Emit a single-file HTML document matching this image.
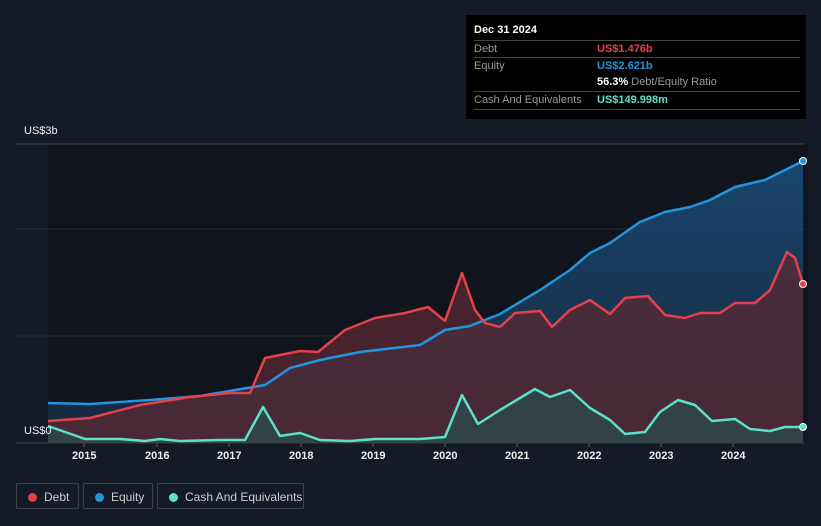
<!DOCTYPE html>
<html><head><style>
body{margin:0;width:821px;height:526px;background:#151b26;font-family:"Liberation Sans",sans-serif;overflow:hidden;position:relative}
.tt{position:absolute;left:466px;top:15px;width:340px;height:104px;background:#000;color:#fff;font-size:11px}
.tt .row{position:absolute;left:8px;width:326px;border-top:1px solid #444;height:17px;line-height:17px}
.tt .l{color:#999;position:absolute;left:0}
.tt .v{position:absolute;left:123px;font-weight:bold}
.leg{position:absolute;top:483px;height:26px;border:1px solid #3a404c;border-radius:2px;color:#ccc;font-size:12px;line-height:26px;box-sizing:border-box}
.leg i{position:absolute;left:11px;top:9px;width:9px;height:9px;border-radius:50%}
.leg span{position:absolute;left:27px}
.ax{position:absolute;top:450px;color:#eee;font-size:11px;font-weight:bold}
</style></head><body>
<svg width="821" height="526" style="position:absolute;left:0;top:0">
<rect x="48" y="144" width="760" height="300" fill="#10141c"/>
<line x1="16" y1="144" x2="805" y2="144" stroke="#3a3f4a"/>
<line x1="16" y1="229" x2="805" y2="229" stroke="#262b35"/>
<line x1="16" y1="336" x2="805" y2="336" stroke="#262b35"/>
<line x1="16" y1="443" x2="805" y2="443" stroke="#3a3f4a"/>
<defs>
<linearGradient id="ge" x1="0" y1="0" x2="0" y2="1"><stop offset="0" stop-color="#1b4f7e" stop-opacity=".85"/><stop offset="1" stop-color="#1b3550" stop-opacity=".6"/></linearGradient>
</defs>
<polygon fill="url(#ge)" points="48,443 48,403 90,404 150,400 200,396 265,385 290,368 320,360 360,352 420,345 445,330 470,326 500,314 540,290 570,270 590,253 610,243 640,222 665,212 690,207 710,200 735,187 765,180 803,161 803,443"/>
<polygon fill="#5a2a33" fill-opacity=".75" points="48,443 48,421 90,418 140,405 190,397 230,393 250,393 265,358 300,351 318,352 345,330 375,318 405,313 428,307 445,321 462,273 475,310 485,323 500,327 515,313 540,311 552,327 570,310 590,300 610,314 625,298 648,296 665,315 685,318 700,313 720,313 735,303 755,303 770,290 787,252 795,258 803,284 803,443"/>
<polygon fill="#2c4a4a" fill-opacity=".8" points="48,443 48,426 85,439 120,439 145,441 160,439 180,441 220,440 245,440 263,407 280,436 300,433 320,440 350,441 375,439 420,439 445,437 462,395 478,424 500,410 520,398 535,389 550,397 570,390 590,408 610,420 625,434 645,432 660,412 678,400 695,405 712,421 735,419 750,429 770,431 785,427 803,427 803,443"/>
<polyline fill="none" stroke="#2394df" stroke-width="2.5" stroke-linejoin="round" points="48,403 90,404 150,400 200,396 265,385 290,368 320,360 360,352 420,345 445,330 470,326 500,314 540,290 570,270 590,253 610,243 640,222 665,212 690,207 710,200 735,187 765,180 803,161"/>
<polyline fill="none" stroke="#e5414a" stroke-width="2.5" stroke-linejoin="round" points="48,421 90,418 140,405 190,397 230,393 250,393 265,358 300,351 318,352 345,330 375,318 405,313 428,307 445,321 462,273 475,310 485,323 500,327 515,313 540,311 552,327 570,310 590,300 610,314 625,298 648,296 665,315 685,318 700,313 720,313 735,303 755,303 770,290 787,252 795,258 803,284"/>
<polyline fill="none" stroke="#5de0c9" stroke-width="2.5" stroke-linejoin="round" points="48,426 85,439 120,439 145,441 160,439 180,441 220,440 245,440 263,407 280,436 300,433 320,440 350,441 375,439 420,439 445,437 462,395 478,424 500,410 520,398 535,389 550,397 570,390 590,408 610,420 625,434 645,432 660,412 678,400 695,405 712,421 735,419 750,429 770,431 785,427 803,427"/>
<circle cx="803" cy="161" r="3.5" fill="#2394df" stroke="#fff" stroke-width="1"/>
<circle cx="803" cy="284" r="3.5" fill="#e5414a" stroke="#fff" stroke-width="1"/>
<circle cx="803" cy="427" r="3.5" fill="#5de0c9" stroke="#fff" stroke-width="1"/>
<g stroke="#555"><line x1="84" y1="443" x2="84" y2="447"/><line x1="157" y1="443" x2="157" y2="447"/><line x1="229" y1="443" x2="229" y2="447"/><line x1="301" y1="443" x2="301" y2="447"/><line x1="373" y1="443" x2="373" y2="447"/><line x1="445" y1="443" x2="445" y2="447"/><line x1="517" y1="443" x2="517" y2="447"/><line x1="589" y1="443" x2="589" y2="447"/><line x1="661" y1="443" x2="661" y2="447"/><line x1="733" y1="443" x2="733" y2="447"/></g>
</svg>
<div style="position:absolute;left:24px;top:125px;color:#eee;font-size:11px">US$3b</div>
<div style="position:absolute;left:24px;top:425px;color:#eee;font-size:11px">US$0</div>
<div class="ax" style="left:72px">2015</div><div class="ax" style="left:145px">2016</div><div class="ax" style="left:217px">2017</div><div class="ax" style="left:289px">2018</div><div class="ax" style="left:361px">2019</div><div class="ax" style="left:433px">2020</div><div class="ax" style="left:505px">2021</div><div class="ax" style="left:577px">2022</div><div class="ax" style="left:649px">2023</div><div class="ax" style="left:721px">2024</div>
<div class="tt">
<div style="position:absolute;left:8px;top:9px;font-weight:bold;font-size:11px">Dec 31 2024</div>
<div class="row" style="top:25px"><span class="l">Debt</span><span class="v" style="color:#e5414a">US$1.476b</span></div>
<div class="row" style="top:42px"><span class="l">Equity</span><span class="v" style="color:#2394df">US$2.621b</span></div>
<div class="row" style="top:59px;border-top:none"><span class="v">56.3% <span style="color:#999;font-weight:normal">Debt/Equity Ratio</span></span></div>
<div class="row" style="top:76px"><span class="l">Cash And Equivalents</span><span class="v" style="color:#5de0c9">US$149.998m</span></div>
<div class="row" style="top:94px;height:0"></div>
</div>
<div class="leg" style="left:16px;width:63px"><i style="background:#e5414a"></i><span>Debt</span></div>
<div class="leg" style="left:83px;width:70px"><i style="background:#2394df"></i><span>Equity</span></div>
<div class="leg" style="left:157px;width:147px"><i style="background:#5de0c9"></i><span>Cash And Equivalents</span></div>
</body></html>
